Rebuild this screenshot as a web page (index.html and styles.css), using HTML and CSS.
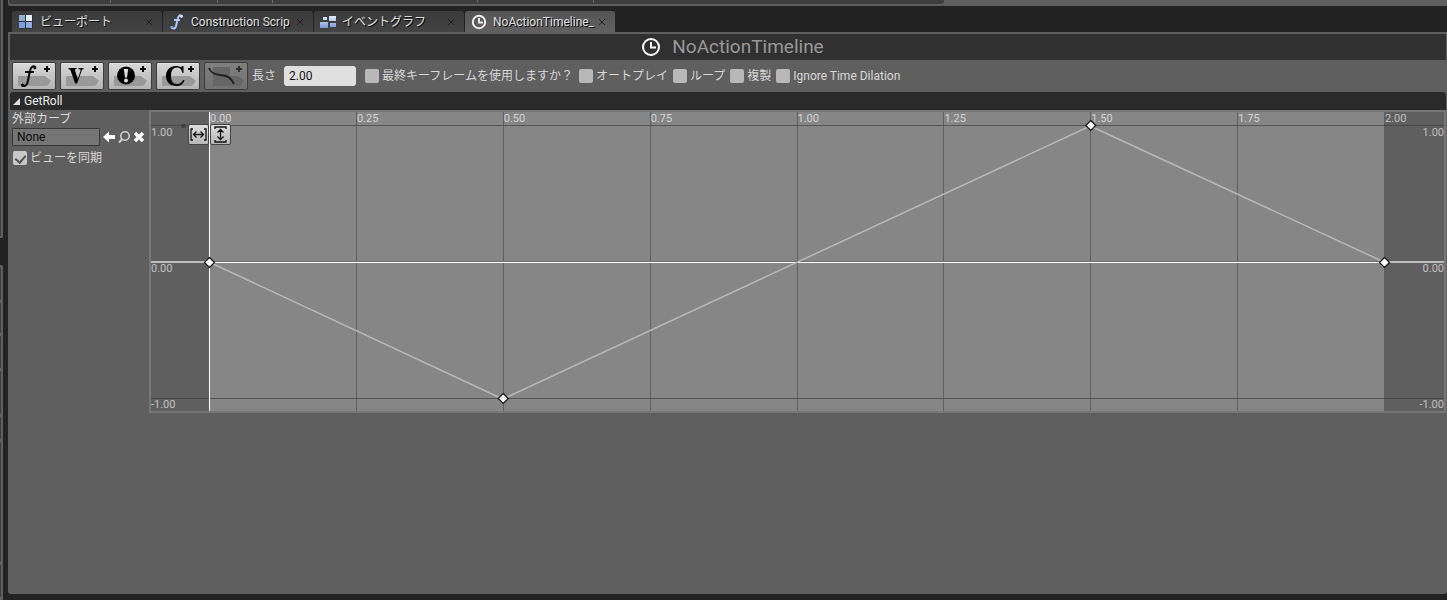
FILE: index.html
```html
<!DOCTYPE html>
<html lang="ja">
<head>
<meta charset="utf-8">
<title>NoActionTimeline</title>
<link rel="stylesheet" href="styles.css">
</head>
<body>
<div class="editor">
  <div class="side-edge">
    <div class="edge-top"></div>
    <div class="edge-list"><i class="cell c1"></i><i class="cell c2"></i><i class="cell c1"></i><i class="cell c3"></i><i class="cell c4"></i><i class="cell c5"></i><i class="cell c1"></i></div>
  </div>
  <div class="workspace">
    <div class="upper-bar"><div class="upper-items"><i class="u1"></i><i class="u2"></i><i class="u3"></i><i class="u4"></i><i class="u5"></i></div></div>
    <nav class="tabs">
      <div class="tab">
        <svg class="tab-icon" width="16" height="16" viewBox="0 0 16 16"><defs><linearGradient id="blue" x1="0" y1="0" x2="0" y2="1"><stop offset="0" stop-color="#e4eefa"/><stop offset="1" stop-color="#7895d8"/></linearGradient></defs><path d="M1 1h14v14l-14-1z" fill="#2a2f3a"/><path fill="#91afd0" d="M1 1h6v6H1z"/><path fill="#e6f3f5" d="M8 1h6v6H8z"/><path fill="#7e9de0" d="M1 8h6v6H1z"/><path fill="#91abe4" d="M8 8h6v6l-6-.3z"/></svg>
        <button class="tab-name">ビューポート</button><button class="close" aria-label="閉じる"><svg width="8" height="8" viewBox="0 0 8 8"><path d="M1 1l6 6M7 1L1 7"/></svg></button>
      </div>
      <div class="tab">
        <svg class="tab-icon" width="16" height="16" viewBox="0 0 16 16"><path d="M13 2.500C12 0 9.500 1 8.700 5L7.300 11c-.7 3-2 4.500-4.500 3M5 6h6" fill="none" stroke="#b4c8fa" stroke-width="2"/><circle cx="12.500" cy="2.500" r="1.400" fill="#d5e2ff"/><circle cx="2.800" cy="13.500" r="1.400" fill="#8ba5ef"/></svg>
        <button class="tab-name">Construction Scrip</button><button class="close" aria-label="閉じる"><svg width="8" height="8" viewBox="0 0 8 8"><path d="M1 1l6 6M7 1L1 7"/></svg></button>
      </div>
      <div class="tab">
        <svg class="tab-icon" width="16" height="16" viewBox="0 0 16 16"><g fill="url(#blue)"><path d="M3 3h4v3H3zM9 2h7v5H9zM0 8h8v6H0zM10 9h6v4h-6z"/></g></svg>
        <button class="tab-name">イベントグラフ</button><button class="close" aria-label="閉じる"><svg width="8" height="8" viewBox="0 0 8 8"><path d="M1 1l6 6M7 1L1 7"/></svg></button>
      </div>
      <div class="tab active">
        <svg class="tab-icon" width="16" height="16" viewBox="0 0 16 16"><g fill="none" stroke="#eee" stroke-width="2"><circle cx="8" cy="8" r="6.200"/><path d="M8 4v4.500h4"/></g></svg>
        <button class="tab-name">NoActionTimeline_</button><button class="close" aria-label="閉じる"><svg width="8" height="8" viewBox="0 0 8 8"><path d="M1 1l6 6M7 1L1 7"/></svg></button>
      </div>
    </nav>
    <main class="panel">
      <header class="title">
        <svg width="20" height="20" viewBox="0 0 20 20"><g fill="none" stroke="#fff" stroke-width="2"><circle cx="10" cy="10" r="8"/><path d="M10 5v5.500h5"/></g></svg>
        <h1>NoActionTimeline</h1>
      </header>
      <div class="toolbar">
        <button class="tool" aria-label="フロートトラックを追加"><svg width="42" height="26" viewBox="0 0 42 26"><path class="tag" d="M5 13h27l6 5-4 5H5z"/><path d="M22.500 4.500C20.500 1.500 17.500 4 16.700 9L15 17.500c-.6 4-2.500 6.500-6 5M12 9h9" fill="none" stroke="#050505" stroke-width="2"/><circle cx="21.800" cy="4.800" r="1.500"/><circle cx="9.500" cy="22" r="1.500"/><path class="plus" d="M31 6h6M34 3v6"/></svg></button>
        <button class="tool" aria-label="ベクタートラックを追加"><svg width="42" height="26" viewBox="0 0 42 26"><path class="tag" d="M5 13h27l6 5-4 5H5z"/><path d="M7.500 5h8v1l-1.700.8 3 9.500 3-9.500-2.300-.8V5h5v1l-1.500.8L16 20.500h-1.800L9.300 6.800 7.500 6z"/><path class="plus" d="M31 6h6M34 3v6"/></svg></button>
        <button class="tool" aria-label="イベントトラックを追加"><svg width="42" height="26" viewBox="0 0 42 26"><path class="tag" d="M5 13h27l6 5-4 5H5z"/><circle cx="17" cy="12.500" r="9"/><path d="M14.800 6h4.400l-1.200 8.500h-2z" fill="#ddd"/><circle cx="17" cy="17.500" r="2" fill="#ddd"/><path class="plus" d="M31 6h6M34 3v6"/></svg></button>
        <button class="tool" aria-label="カラートラックを追加"><svg width="42" height="26" viewBox="0 0 42 26"><path class="tag" d="M5 13h28l6 5-4 5H5z"/><path d="M26.500 3v7h-1c-.8-3.500-2.500-5.500-5.500-5.500-4 0-6 3-6 8.500 0 5 2 8 6 8 2.800 0 4.800-1.500 6.500-4.300l1 .7C26 21 23.500 23 19.500 23 13 23 9 19 9 13S13 3 19 3c2.200 0 3.300.6 4.500 1 1 .2 1.500-.2 2-1h1z"/><path class="plus" d="M31 6h6M34 3v6"/></svg></button>
        <button class="tool disabled" disabled aria-label="外部カーブを追加"><svg width="42" height="26" viewBox="0 0 42 26"><path class="tag" d="M8 4h17v9h8l6 5-4 5H8z"/><path d="M4 5c2 5 5 6.500 11 7 8 .5 11 3 14 9" fill="none" stroke="#202020" stroke-width="2"/><path class="plus" d="M31 6h6M34 3v6"/></svg></button>
        <label class="length-label" for="len">長さ</label><input class="length" id="len" type="text" value="2.00">
        <label class="option"><input type="checkbox">最終キーフレームを使用しますか？</label>
        <label class="option"><input type="checkbox">オートプレイ</label>
        <label class="option"><input type="checkbox">ループ</label>
        <label class="option"><input type="checkbox">複製</label>
        <label class="option"><input type="checkbox">Ignore Time Dilation</label>
      </div>
      <section class="track">
        <button class="track-head"><svg width="9" height="9" viewBox="0 0 9 9"><path d="M8 1v7H1z" fill="#ddd"/></svg>GetRoll</button>
        <div class="track-body">
          <div class="track-side">
            <label for="curve">外部カーブ</label>
            <div class="curve-row">
              <input class="curve" id="curve" type="text" value="None">
              <button class="mini" aria-label="使用"><svg width="12" height="12" viewBox="0 0 12 12"><path d="M0 6l6-5.500V4h6v4H6v3.500z" fill="#fff"/></svg></button>
              <button class="mini" aria-label="参照"><svg width="12" height="12" viewBox="0 0 12 12"><circle cx="7" cy="5" r="4.200" fill="none" stroke="#d0d0d0" stroke-width="1.600"/><path d="M4.300 8L1 11.500" stroke="#d0d0d0" stroke-width="2"/></svg></button>
              <button class="mini" aria-label="クリア"><svg width="12" height="12" viewBox="0 0 12 12"><path d="M2 2l8 8M10 2l-8 8" stroke="#fff" stroke-width="3.400"/></svg></button>
            </div>
            <label class="option sync"><input type="checkbox" checked>ビューを同期</label>
          </div>
          <div class="chart">
            <div class="values"><span>1.00</span><span>0.00</span><span>-1.00</span></div>
            <div class="plot">
              <span>0.00</span><span>0.25</span><span>0.50</span><span>0.75</span><span>1.00</span><span>1.25</span><span>1.50</span><span>1.75</span>
            </div>
            <div class="values right"><span class="end">2.00</span><span>1.00</span><span>0.00</span><span>-1.00</span></div>
            <svg class="rules"><path d="M0 13.500h4000M0 286.500h4000" stroke="#404040" stroke-opacity=".7"/><path d="M0 150h4000" stroke="#bdbdbd" stroke-width="2"/><ellipse cx="32.500" cy="14" rx="2.500" ry="2" fill="#3c3c3c"/></svg>
            <div class="curve-layer">
              <svg class="curve-plot" width="100%" height="100%">
                <line x1="0" x2="100%" y1="149.500" y2="149.500" stroke="#707070"/>
                <line x1="0" x2="100%" y1="150.500" y2="150.500" stroke="#fff"/>
                <g stroke="#b8b8b8" stroke-width="1.500"><line x1="0" y1="150" x2="25%" y2="287"/><line x1="25%" y1="287" x2="75%" y2="14"/><line x1="75%" y1="14" x2="100%" y2="150"/></g>
                <line x1=".5" x2=".5" y1="0" y2="100%" stroke="#fff"/>
                <g fill="#fff" stroke="#111" stroke-width="1.200">
                  <svg class="key" x="0" y="150"><path d="M.5-4.500l5 5-5 5-5-5z"/></svg>
                  <svg class="key" x="25%" y="286"><path d="M.5-4.500l5 5-5 5-5-5z"/></svg>
                  <svg class="key" x="75%" y="13"><path d="M.5-4.500l5 5-5 5-5-5z"/></svg>
                  <svg class="key" x="100%" y="150"><path d="M.5-4.500l5 5-5 5-5-5z"/></svg>
                </g>
              </svg>
            </div>
            <div class="fit">
              <button aria-label="水平に合わせる"><svg width="19" height="19" viewBox="0 0 19 19"><path d="M4 4H2v11h2M15 4h2v11h-2M4.500 9.500h10M7.500 6.500l-3 3 3 3M11.500 6.500l3 3-3 3"/></svg></button>
              <button aria-label="垂直に合わせる"><svg width="19" height="19" viewBox="0 0 19 19"><path d="M4 4V2h11v2M4 15v2h11v-2M9.500 4.500v10M6.500 7.500l3-3 3 3M6.500 11.500l3 3 3-3"/></svg></button>
            </div>
          </div>
        </div>
      </section>
    </main>
  </div>
</div>
</body>
</html>
```
FILE: styles.css
```css
* { box-sizing: border-box; }
body {
  margin: 0;
  background: #222;
  color: #d8d8d8;
  font: 12px/16px Roboto, "Noto Sans CJK JP", sans-serif;
}
button, input { font: inherit; color: inherit; margin: 0; }
button { padding: 0; border: 0; background: none; }
svg { display: block; flex: none; }

.editor { display: flex; min-height: 100vh; }
.side-edge { width: 3px; margin-right: 5px; display: flex; flex-direction: column; gap: 27px; }
.edge-top {
  height: 238px;
  background: #3c3c3c;
  border-right: 2px solid #5f5f5f;
  border-bottom: 2px solid #5f5f5f;
  border-bottom-right-radius: 2px;
}
.edge-list { flex: 1; display: flex; flex-direction: column; gap: 3px; background: #5f5f5f; padding: 3px 2px 0 0; border-top-right-radius: 2px; }
.cell { background: #3c3c3c; border-radius: 0 1px 1px 0; }
.c1 { height: 32px; }
.c2 { height: 30px; }
.c3 { height: 43px; }
.c4 { height: 22px; }
.c5 { height: 120px; }

.workspace { flex: 1; min-width: 0; display: flex; flex-direction: column; padding-bottom: 6px; }
.upper-bar { height: 6px; background: #5f5f5f; padding-left: 1px; border-bottom-left-radius: 2px; }
.upper-items { display: flex; height: 4px; width: 65%; background: #3e3e3e; border-radius: 0 0 3px 3px; }
.upper-items i { border-right: 1px solid #6a6a6a; height: 3px; }
.u1 { width: 102px; }
.u2 { width: 107px; }
.u3 { width: 55px; }
.u4 { width: 205px; }
.u5 { width: 116px; }

.tabs { display: flex; gap: 1px; padding: 5px 4px 0; }
.tab {
  width: 150px;
  height: 21px;
  display: flex;
  align-items: center;
  padding: 0 9px 0 6px;
  background: linear-gradient(#3a3a3a, #434343);
  border-radius: 3px 3px 0 0;
  color: #e0e0e0;
  text-shadow: 1px 1px 0 #000;
}
.tab.active { background: linear-gradient(#555, #606060); }
.tab-icon { margin-right: 6px; }
.tab-name { flex: 1; white-space: nowrap; text-align: left; text-shadow: inherit; }
.close { width: 8px; }
.close path { fill: none; stroke: #222; }

.panel { flex: 1; background: #5f5f5f; border-radius: 0 0 3px 3px; padding: 2px 1px 0 2px; }
.title { height: 26px; display: flex; align-items: center; justify-content: center; gap: 11px; background: #303030; padding-left: 9px; }
.title h1 { margin: 0; font-size: 19px; line-height: 24px; font-weight: 400; color: #999; }

.toolbar { display: flex; align-items: center; height: 32px; padding-left: 2px; }
.tool {
  width: 44px;
  height: 28px;
  margin-right: 4px;
  flex: none;
  border: 1px solid #3c3c3c;
  border-radius: 2px;
  background: linear-gradient(#d8d8d8, #b4b4b4);
  box-shadow: inset 0 1px 0 #e4e4e4;
}
.tool.disabled { background: linear-gradient(#808080, #707070); box-shadow: none; }
.tag { fill: #999; }
.disabled .tag { fill: #666; }
.plus { fill: none; stroke: #050505; stroke-width: 2; }
.disabled .plus { stroke: #303030; }
.length-label { margin-right: 8px; white-space: nowrap; }
.length { width: 72px; height: 20px; margin-right: 9px; padding: 0 5px; background: #e0e0e0; color: #111; border: 0; border-radius: 3px; }
.option { display: flex; align-items: center; gap: 3px; margin-right: 5px; white-space: nowrap; }
.toolbar .option + .option { margin-left: 1px; margin-right: 4px; }
.option input { appearance: none; width: 14px; height: 14px; flex: none; border-radius: 2px; background: #b8b8b8; }
.option input:checked { background: #c8c8c8; display: flex; align-items: flex-start; justify-content: center; padding-top: 2px; }
.option input:checked::after { content: ""; width: 5px; height: 8px; border: solid #505050; border-width: 0 2px 2px 0; transform: rotate(40deg); }

.track-head { display: flex; align-items: center; gap: 3px; width: 100%; height: 18px; padding-left: 2px; background: #2a2a2a; border-radius: 3px 3px 0 0; color: #f0f0f0; }
.track-body { display: flex; }
.track-side { width: 139px; flex: none; padding: 0 0 0 2px; }
.track-side > label { height: 18px; display: flex; align-items: center; }
.track-side .sync { padding-left: 1px; }
.curve-row { display: flex; align-items: center; gap: 3px; height: 18px; margin-bottom: 3px; }
.curve { width: 88px; height: 18px; padding: 0 4px; background: #757575; border: 1px solid #363636; border-radius: 1px; color: #080808; }

.chart {
  position: relative;
  flex: 1;
  min-width: 0;
  height: 303px;
  display: grid;
  grid-template-columns: 58px 1fr 60px;
  border: 2px solid #777;
  font-size: 11px;
  line-height: 13px;
  color: #c0c0c0;
}
.values { display: flex; flex-direction: column; justify-content: space-between; padding: 14px 0 0; }
.values.right { align-items: flex-end; position: relative; }
.end { position: absolute; top: 0; left: 1px; }
.plot { display: grid; grid-template-columns: repeat(8, 1fr); background: #868686; color: #d4d4d4; }
.plot span { border-left: 1px solid #606060; }
.rules { position: absolute; left: 0; top: 0; width: 100%; height: 100%; }
.curve-layer { position: absolute; left: 58px; right: 60px; top: 0; bottom: 0; }
.curve-plot, .key { overflow: visible; }
.fit { position: absolute; left: 37px; top: 12px; display: flex; gap: 1px; }
.fit button { width: 21px; height: 21px; border: 1px solid #444; border-radius: 2px; background: linear-gradient(#ddd, #b8b8b8); }
.fit path { fill: none; stroke: #111; stroke-width: 1.300; }
```
